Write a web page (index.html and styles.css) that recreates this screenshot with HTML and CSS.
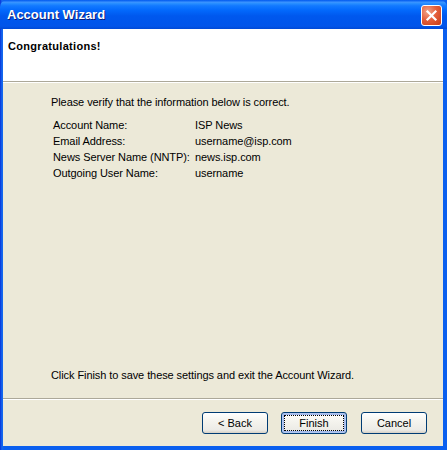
FILE: index.html
```html
<!DOCTYPE html>
<html>
<head>
<meta charset="utf-8">
<link rel="stylesheet" href="styles.css">
</head>
<body>
<div class="window">
  <div class="titlebar">
    <span class="title">Account Wizard</span>
    <div class="close">
      <svg width="13" height="13" viewBox="0 0 13 13"><path d="M2.5 2.5 L10.5 10.5 M10.5 2.5 L2.5 10.5" stroke="#fff" stroke-width="2.2" stroke-linecap="square"/></svg>
    </div>
  </div>
  <div class="frame">
    <div class="header">
      <div class="heading">Congratulations!</div>
    </div>
    <div class="content">
      <p class="intro">Please verify that the information below is correct.</p>
      <div class="info">
        <div class="label">Account Name:</div><div class="value">ISP News</div>
        <div class="label">Email Address:</div><div class="value">username@isp.com</div>
        <div class="label">News Server Name (NNTP):</div><div class="value">news.isp.com</div>
        <div class="label">Outgoing User Name:</div><div class="value">username</div>
      </div>
      <div class="spacer"></div>
      <p class="outro">Click Finish to save these settings and exit the Account Wizard.</p>
    </div>
    <div class="footer">
      <button class="btn">&lt; Back</button>
      <button class="btn default">Finish</button>
      <button class="btn cancel">Cancel</button>
    </div>
  </div>
</div>
</body>
</html>
```
FILE: styles.css
```css
html, body { margin: 0; padding: 0; }
body { width: 447px; height: 450px; overflow: hidden; background: #0A246A; }
.window {
  width: 447px; height: 450px; box-sizing: border-box;
  display: flex; flex-direction: column;
  background: linear-gradient(to right, #0831D9 0, #166AEE 2px, #0A5FEF 4px);
  font-family: Tahoma, "Liberation Sans", sans-serif;
  font-size: 11px; letter-spacing: -0.08px; color: #000;
}
.titlebar {
  height: 29px; flex: none; display: flex; align-items: center; justify-content: space-between;
  padding: 0 5px 0 7px;
  border-radius: 7px 7px 0 0;
  background: linear-gradient(to bottom, #0058EE 0%, #3A93FF 8%, #288EFF 12%, #1279FF 20%, #0369FC 35%, #0058EE 55%, #0055EB 80%, #0255EA 90%, #0049D6 100%);
}
.title {
  font-family: "Liberation Sans", sans-serif; font-weight: bold; font-size: 13px; color: #fff;
  text-shadow: 1px 1px 0 #0A1E7A; letter-spacing: 0;
}
.close {
  width: 21px; height: 21px; box-sizing: border-box; border: 1px solid #fff; border-radius: 3px;
  background: radial-gradient(circle at 30% 30%, #F0A58A 0%, #E5603C 45%, #C73B15 100%);
  display: flex; align-items: center; justify-content: center; margin-top: 1px;
}
.frame {
  flex: 1; display: flex; flex-direction: column;
  margin: 0 4px 4px 3px; background: #ECE9D8;
}
.header {
  height: 53px; flex: none; background: #fff; box-sizing: border-box;
  border-bottom: 1px solid #ACA899; box-shadow: 0 1px 0 #fff;
  padding: 11px 0 0 5px;
}
.heading { font-weight: bold; font-size: 11px; letter-spacing: 0.3px; }
.content { flex: 1; display: flex; flex-direction: column; padding: 13px 0 0 48px; }
.intro { margin: 0 0 9px 0; line-height: 14px; }
.info {
  display: grid; grid-template-columns: 142px auto; row-gap: 2px;
  padding-left: 2px; line-height: 14px;
}
.spacer { flex: 1; }
.outro { margin: 0 0 16px 0; line-height: 14px; }
.footer {
  height: 48px; flex: none; box-sizing: border-box;
  border-top: 1px solid #ACA899; box-shadow: inset 0 1px 0 #fff;
  display: flex; justify-content: flex-end; align-items: flex-start;
  padding: 13px 16px 0 0;
}
.btn {
  width: 66px; height: 22px; box-sizing: border-box;
  border: 1px solid #003C74; border-radius: 3px;
  background: linear-gradient(to bottom, #FFFFFF 0%, #F5F4EE 40%, #ECEBE6 85%, #D6D0C5 100%);
  font-family: Tahoma, "Liberation Sans", sans-serif; font-size: 11px; color: #000; padding: 0;
}
.btn.default {
  margin-left: 13px;
  box-shadow: inset 0 0 0 1px #B2C6EF, inset 0 0 0 2px #A2B9EC;
  outline: 1px dotted #000; outline-offset: -4px;
}
.btn.cancel { margin-left: 14px; }
```
